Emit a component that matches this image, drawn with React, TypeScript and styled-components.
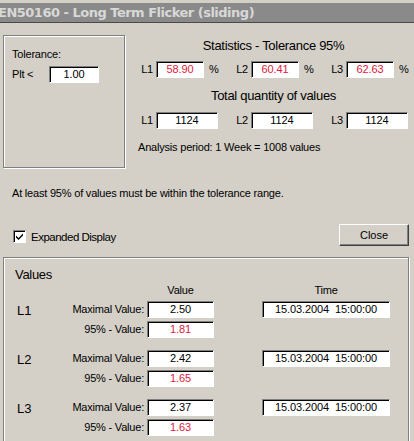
import React from 'react';
import styled, { createGlobalStyle } from 'styled-components';

const GlobalStyle = createGlobalStyle`
  html, body {
    margin: 0;
    padding: 0;
    background: #d4d0c8;
  }
  body {
    font-family: "Liberation Sans", Arial, sans-serif;
    color: #000;
  }
`;

const Window = styled.div`
  width: 414px;
  height: 441px;
  overflow: hidden;
  background: #d4d0c8;
  padding-top: 3px;
  box-sizing: border-box;
`;

const TitleBar = styled.div`
  height: 19px;
  background: #8a8a8a;
  border-bottom: 1px solid #4a4a4a;
  display: flex;
  align-items: center;
  overflow: hidden;
`;

const TitleText = styled.span`
  margin-left: -2px;
  font-family: "DejaVu Sans", Verdana, sans-serif;
  font-weight: bold;
  font-size: 13px;
  letter-spacing: -0.5px;
  color: #d8d8d8;
  white-space: nowrap;
`;

const Body = styled.div`
  padding: 0 5px 0 3px;
`;

const TopSection = styled.div`
  display: flex;
  gap: 13px;
`;

const GroupBox = styled.div<{ $width?: number; $height?: number }>`
  box-sizing: border-box;
  flex-shrink: 0;
  width: ${({ $width }) => ($width ? `${$width}px` : 'auto')};
  height: ${({ $height }) => ($height ? `${$height}px` : 'auto')};
  border: 1px solid #808080;
  box-shadow: inset 1px 1px 0 #fff, 1px 1px 0 #fff;
`;

const ToleranceBox = styled(GroupBox)`
  margin-top: 12px;
  padding: 12px 0 0 8px;
`;

const SmallText = styled.div`
  font-size: 11px;
  letter-spacing: -0.2px;
  line-height: 13px;
`;

const PltRow = styled.div`
  display: flex;
  align-items: center;
  margin-top: 5px;
`;

const PltLabel = styled(SmallText)`
  width: 37px;
`;

const Field = styled.div<{ $width: number; $red?: boolean }>`
  box-sizing: border-box;
  flex-shrink: 0;
  width: ${({ $width }) => $width}px;
  height: 17px;
  background: #fff;
  border-top: 1px solid #808080;
  border-left: 1px solid #808080;
  border-bottom: 1px solid #fff;
  border-right: 1px solid #fff;
  box-shadow: inset 1px 1px 0 #000;
  font-size: 11px;
  letter-spacing: -0.1px;
  line-height: 15px;
  text-align: center;
  color: ${({ $red }) => ($red ? '#e0203a' : '#000')};
  white-space: pre;
`;

const StatsColumn = styled.div`
  flex: 1;
  min-width: 0;
  padding-top: 15px;
  display: flex;
  flex-direction: column;
`;

const Heading = styled.div<{ $gap: number }>`
  font-size: 13px;
  letter-spacing: -0.3px;
  line-height: 16px;
  text-align: center;
  margin-top: ${({ $gap }) => $gap}px;
`;

const StatRow = styled.div<{ $gap: number }>`
  display: flex;
  margin-top: ${({ $gap }) => $gap}px;
`;

const StatCell = styled.div`
  flex: 0 0 95px;
  display: flex;
  align-items: center;

  &:last-child {
    flex: 1 1 auto;
  }
`;

const PhaseLabel = styled(SmallText)`
  width: 15px;
  padding-right: 3px;
  text-align: right;
`;

const Percent = styled(SmallText)`
  margin-left: 5px;
`;

const AnalysisText = styled(SmallText)`
  margin-top: 12px;
`;

const Note = styled(SmallText)`
  margin: 19px 0 0 9px;
`;

const ControlRow = styled.div`
  display: flex;
  align-items: center;
  justify-content: space-between;
  margin-top: 24px;
`;

const CheckLabel = styled.label`
  display: flex;
  align-items: center;
  gap: 5px;
  margin-left: 10px;
  margin-top: 3px;
  font-size: 11.5px;
  letter-spacing: -0.5px;
`;

const CheckBox = styled.span`
  box-sizing: border-box;
  width: 13px;
  height: 13px;
  background: #fff;
  border-top: 1px solid #808080;
  border-left: 1px solid #808080;
  border-bottom: 1px solid #fff;
  border-right: 1px solid #fff;
  box-shadow: inset 1px 1px 0 #000;
  display: flex;
  align-items: center;
  justify-content: center;
`;

const Button = styled.button`
  box-sizing: border-box;
  width: 70px;
  height: 22px;
  padding: 0;
  background: #d4d0c8;
  border-top: 1px solid #fff;
  border-left: 1px solid #fff;
  border-bottom: 1px solid #404040;
  border-right: 1px solid #404040;
  box-shadow: inset -1px -1px 0 #808080;
  font-family: "Liberation Sans", Arial, sans-serif;
  font-size: 11px;
  color: #000;
`;

const ValuesBox = styled(GroupBox)`
  margin-top: 11px;
  padding: 9px 0 20px 13px;
`;

const ValuesTitle = styled.div`
  margin-left: -2px;
  font-size: 13px;
  letter-spacing: -0.3px;
  line-height: 16px;
`;

const ValuesGrid = styled.div`
  display: grid;
  grid-template-columns: 30px 100px 67px 176px;
`;

const ColHeader = styled(SmallText)<{ $width?: number }>`
  width: ${({ $width }) => ($width ? `${$width}px` : 'auto')};
  text-align: center;
  height: 14px;
  line-height: 14px;
  margin-bottom: 4px;
`;

const Phase = styled.div`
  font-size: 13px;
  line-height: 17px;
  padding-top: 1px;
`;

const RowLabel = styled(SmallText)`
  text-align: right;
  padding-right: 3px;
  line-height: 17px;
`;

const Cell = styled.div<{ $after?: number }>`
  margin-bottom: ${({ $after }) => $after ?? 0}px;
`;

const TimeCell = styled(Cell)`
  padding-left: 48px;
`;

const tolerance = [
  { phase: 'L1', pct: '58.90', total: '1124' },
  { phase: 'L2', pct: '60.41', total: '1124' },
  { phase: 'L3', pct: '62.63', total: '1124' },
];

const values = [
  { phase: 'L1', max: '2.50', p95: '1.81', time: '15.03.2004  15:00:00' },
  { phase: 'L2', max: '2.42', p95: '1.65', time: '15.03.2004  15:00:00' },
  { phase: 'L3', max: '2.37', p95: '1.63', time: '15.03.2004  15:00:00' },
];

const Check = () => (
  <svg width="9" height="9" viewBox="0 0 9 9">
    <path d="M1 3.5 L3.5 6 L8 1.5 L8 3.5 L3.5 8 L1 5.5 Z" fill="#000" />
  </svg>
);

export default function App() {
  return (
    <>
      <GlobalStyle />
      <Window>
        <TitleBar>
          <TitleText>EN50160 - Long Term Flicker (sliding)</TitleText>
        </TitleBar>
        <Body>
          <TopSection>
            <ToleranceBox $width={122} $height={133}>
              <SmallText>Tolerance:</SmallText>
              <PltRow>
                <PltLabel>Plt &lt;</PltLabel>
                <Field $width={50}>1.00</Field>
              </PltRow>
            </ToleranceBox>
            <StatsColumn>
              <Heading $gap={0}>Statistics - Tolerance 95%</Heading>
              <StatRow $gap={7}>
                {tolerance.map((t) => (
                  <StatCell key={t.phase}>
                    <PhaseLabel>{t.phase}</PhaseLabel>
                    <Field $width={48} $red>
                      {t.pct}
                    </Field>
                    <Percent>%</Percent>
                  </StatCell>
                ))}
              </StatRow>
              <Heading $gap={10}>Total quantity of values</Heading>
              <StatRow $gap={8}>
                {tolerance.map((t) => (
                  <StatCell key={t.phase}>
                    <PhaseLabel>{t.phase}</PhaseLabel>
                    <Field $width={62}>{t.total}</Field>
                  </StatCell>
                ))}
              </StatRow>
              <AnalysisText>Analysis period: 1 Week = 1008 values</AnalysisText>
            </StatsColumn>
          </TopSection>

          <Note>At least 95% of values must be within the tolerance range.</Note>

          <ControlRow>
            <CheckLabel>
              <CheckBox>
                <Check />
              </CheckBox>
              Expanded Display
            </CheckLabel>
            <Button>Close</Button>
          </ControlRow>

          <ValuesBox>
            <ValuesTitle>Values</ValuesTitle>
            <ValuesGrid>
              <div />
              <div />
              <ColHeader>Value</ColHeader>
              <TimeCell>
                <ColHeader $width={128}>Time</ColHeader>
              </TimeCell>
              {values.map((v) => (
                <React.Fragment key={v.phase}>
                  <Phase>{v.phase}</Phase>
                  <RowLabel>Maximal Value:</RowLabel>
                  <Cell $after={3}>
                    <Field $width={67}>{v.max}</Field>
                  </Cell>
                  <TimeCell>
                    <Field $width={128}>{v.time}</Field>
                  </TimeCell>
                  <div />
                  <RowLabel>95% - Value:</RowLabel>
                  <Cell $after={12}>
                    <Field $width={67} $red>
                      {v.p95}
                    </Field>
                  </Cell>
                  <div />
                </React.Fragment>
              ))}
            </ValuesGrid>
          </ValuesBox>
        </Body>
      </Window>
    </>
  );
}
